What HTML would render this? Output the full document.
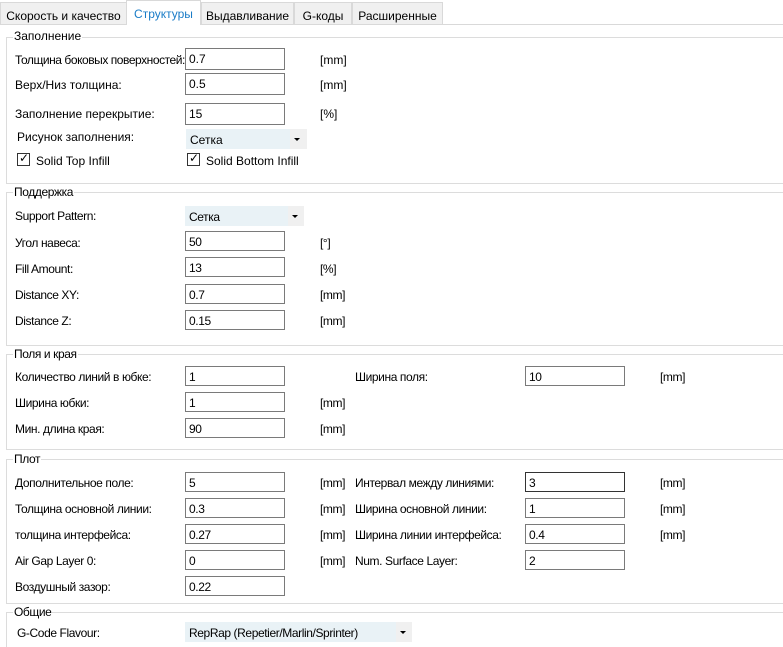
<!DOCTYPE html><html><head><meta charset="utf-8"><style>
*{box-sizing:border-box;margin:0;padding:0}
html,body{width:783px;height:647px;overflow:hidden}
body{background:#fff;font-family:"Liberation Sans",sans-serif;font-size:12px;color:#000;position:relative}
div,span{position:absolute}
.tab{top:2px;height:22px;background:#f0f0f0;border:1px solid #d9d9d9;border-bottom:none;padding:6px 0 0 0;text-align:center;white-space:nowrap}
.act{top:0;height:25px;background:#fff;color:#1a7cc7;border-color:#d9d9d9;padding-top:6px}
.g{border:1px solid #dcdcdc;border-right:none;left:6px;width:790px}
.gt{background:#fff;padding:0 1px;left:13px;white-space:nowrap}
.l{left:15px;white-space:nowrap}
.c{letter-spacing:-0.4px}
.i{width:100px;height:22px;border:1px solid #7a7a7a;padding:3px 0 0 3px}
.u{white-space:nowrap}
.dd{height:22px;background:#e9f2f6;padding:4px 0 0 4px}
.ar{width:17px;height:22px;background:#f0f0f0}
.ar:after{content:"";position:absolute;left:4px;top:9px;border:3px solid transparent;border-top:3px solid #000;border-bottom:none}
.cb{width:13px;height:13px;border:1px solid #333;background:#fff}
</style></head><body>
<div style="left:0;top:24px;width:783px;height:1px;background:#d9d9d9"></div>
<div class="tab" style="left:0;width:127px">Скорость и качество</div>
<div class="tab act" style="left:126px;width:75px">Структуры</div>
<div class="tab" style="left:201px;width:93px">Выдавливание</div>
<div class="tab" style="left:294px;width:58px">G-коды</div>
<div class="tab" style="left:352px;width:91px">Расширенные</div>

<div class="g" style="top:37px;height:147px"></div><div class="gt" style="top:29px">Заполнение</div>
<div class="l" style="top:53px;letter-spacing:-0.45px">Толщина боковых поверхностей:</div><div class="i" style="left:185px;top:48px">0.7</div><span class="u" style="left:320px;top:53px">[mm]</span>
<div class="l" style="top:78px">Верх/Низ толщина:</div><div class="i" style="left:185px;top:73px">0.5</div><span class="u" style="left:320px;top:78px">[mm]</span>
<div class="l" style="top:107px">Заполнение перекрытие:</div><div class="i" style="left:185px;top:103px">15</div><span class="u" style="left:320px;top:107px">[%]</span>
<div class="l" style="left:17px;top:130px">Рисунок заполнения:</div><div class="dd" style="left:186px;top:129px;width:104px;height:20px;padding-top:4px">Сетка</div><div class="ar" style="left:290px;top:129px;height:20px"></div>
<div class="cb" style="left:17px;top:153px"></div><span style="left:19px;top:151px">✓</span><div class="l" style="left:36px;top:154px">Solid Top Infill</div>
<div class="cb" style="left:187px;top:153px"></div><span style="left:189px;top:151px">✓</span><div class="l" style="left:206px;top:154px">Solid Bottom Infill</div>

<div class="g c" style="top:192px;height:154px"></div><div class="gt c" style="top:185px">Поддержка</div>
<div class="l c" style="top:209px">Support Pattern:</div>
<div class="dd c" style="left:185px;top:206px;width:108px;height:20px">Сетка</div><div class="ar" style="left:288px;top:206px;height:20px;width:16px"></div>
<div class="l c" style="top:236px">Угол навеса:</div><div class="i c" style="left:185px;top:231px;height:20px">50</div><span class="u c" style="left:320px;top:236px">[°]</span>
<div class="l c" style="top:262px">Fill Amount:</div><div class="i c" style="left:185px;top:257px;height:20px">13</div><span class="u c" style="left:320px;top:262px">[%]</span>
<div class="l c" style="top:288px">Distance XY:</div><div class="i c" style="left:185px;top:284px;height:20px">0.7</div><span class="u c" style="left:320px;top:288px">[mm]</span>
<div class="l c" style="top:314px">Distance Z:</div><div class="i c" style="left:185px;top:310px;height:20px">0.15</div><span class="u c" style="left:320px;top:314px">[mm]</span>

<div class="g c" style="top:354px;height:96px"></div><div class="gt c" style="top:347px">Поля и края</div>
<div class="l c" style="top:370px">Количество линий в юбке:</div><div class="i c" style="left:185px;top:366px;height:20px">1</div>
<div class="u c" style="left:355px;top:370px">Ширина поля:</div><div class="i c" style="left:525px;top:366px;height:20px">10</div><span class="u c" style="left:660px;top:370px">[mm]</span>
<div class="l c" style="top:396px">Ширина юбки:</div><div class="i c" style="left:185px;top:392px;height:20px">1</div><span class="u c" style="left:320px;top:396px">[mm]</span>
<div class="l c" style="top:422px">Мин. длина края:</div><div class="i c" style="left:185px;top:418px;height:20px">90</div><span class="u c" style="left:320px;top:422px">[mm]</span>

<div class="g c" style="top:459px;height:145px"></div><div class="gt c" style="top:452px">Плот</div>
<div class="l c" style="top:476px">Дополнительное поле:</div><div class="i c" style="left:185px;top:472px;height:20px">5</div><span class="u c" style="left:320px;top:476px">[mm]</span>
<div class="u c" style="left:355px;top:476px">Интервал между линиями:</div><div class="i c" style="left:525px;top:472px;height:20px;border-color:#333">3</div><span class="u c" style="left:660px;top:476px">[mm]</span>
<div class="l c" style="top:502px">Толщина основной линии:</div><div class="i c" style="left:185px;top:498px;height:20px">0.3</div><span class="u c" style="left:320px;top:502px">[mm]</span>
<div class="u c" style="left:355px;top:502px">Ширина основной линии:</div><div class="i c" style="left:525px;top:498px;height:20px">1</div><span class="u c" style="left:660px;top:502px">[mm]</span>
<div class="l c" style="top:528px">толщина интерфейса:</div><div class="i c" style="left:185px;top:524px;height:20px">0.27</div><span class="u c" style="left:320px;top:528px">[mm]</span>
<div class="u c" style="left:355px;top:528px">Ширина линии интерфейса:</div><div class="i c" style="left:525px;top:524px;height:20px">0.4</div><span class="u c" style="left:660px;top:528px">[mm]</span>
<div class="l c" style="top:554px">Air Gap Layer 0:</div><div class="i c" style="left:185px;top:550px;height:20px">0</div><span class="u c" style="left:320px;top:554px">[mm]</span>
<div class="u c" style="left:355px;top:554px">Num. Surface Layer:</div><div class="i c" style="left:525px;top:550px;height:20px">2</div>
<div class="l c" style="top:580px">Воздушный зазор:</div><div class="i c" style="left:185px;top:576px;height:20px">0.22</div>

<div class="g c" style="top:612px;height:40px"></div><div class="gt c" style="top:605px">Общие</div>
<div class="l c" style="left:17px;top:626px">G-Code Flavour:</div><div class="dd c" style="left:185px;top:622px;width:211px;height:20px">RepRap (Repetier/Marlin/Sprinter)</div><div class="ar" style="left:396px;top:622px;height:20px;width:16px"></div>
</body></html>
